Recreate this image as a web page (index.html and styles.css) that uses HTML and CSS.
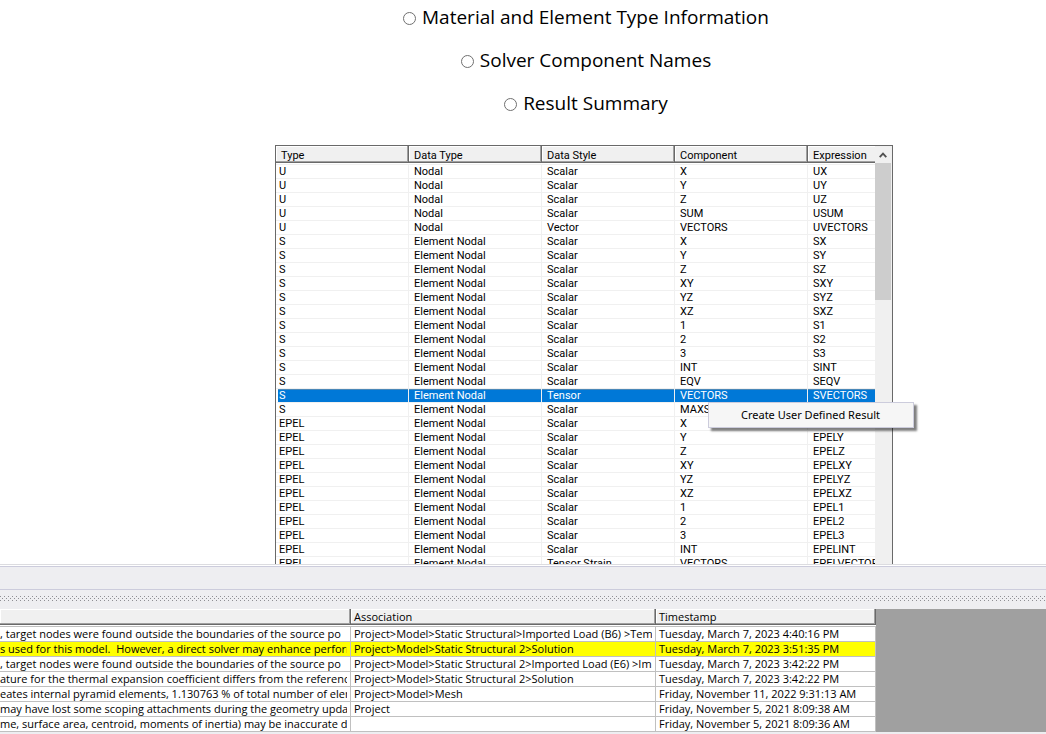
FILE: index.html
```html
<!DOCTYPE html>
<html lang="en">
<head>
<meta charset="utf-8">
<title>Solver Worksheet</title>
<link rel="stylesheet" href="styles.css">
</head>
<body>
<main class="worksheet">
  <form class="views">
    <label class="view"><input class="view-radio" type="radio" name="view">Material and Element Type Information</label>
    <label class="view"><input class="view-radio" type="radio" name="view">Solver Component Names</label>
    <label class="view"><input class="view-radio" type="radio" name="view">Result Summary</label>
  </form>
  <div class="results">
    <div class="grid-pane">
    <table class="grid">
      <thead><tr><th><span class="head">Type</span></th><th><span class="head">Data Type</span></th><th><span class="head">Data Style</span></th><th><span class="head">Component</span></th><th class="last"><span class="head">Expression</span></th></tr></thead>
      <tbody>
        <tr><td>U</td><td>Nodal</td><td>Scalar</td><td>X</td><td>UX</td></tr>
        <tr><td>U</td><td>Nodal</td><td>Scalar</td><td>Y</td><td>UY</td></tr>
        <tr><td>U</td><td>Nodal</td><td>Scalar</td><td>Z</td><td>UZ</td></tr>
        <tr><td>U</td><td>Nodal</td><td>Scalar</td><td>SUM</td><td>USUM</td></tr>
        <tr><td>U</td><td>Nodal</td><td>Vector</td><td>VECTORS</td><td>UVECTORS</td></tr>
        <tr><td>S</td><td>Element Nodal</td><td>Scalar</td><td>X</td><td>SX</td></tr>
        <tr><td>S</td><td>Element Nodal</td><td>Scalar</td><td>Y</td><td>SY</td></tr>
        <tr><td>S</td><td>Element Nodal</td><td>Scalar</td><td>Z</td><td>SZ</td></tr>
        <tr><td>S</td><td>Element Nodal</td><td>Scalar</td><td>XY</td><td>SXY</td></tr>
        <tr><td>S</td><td>Element Nodal</td><td>Scalar</td><td>YZ</td><td>SYZ</td></tr>
        <tr><td>S</td><td>Element Nodal</td><td>Scalar</td><td>XZ</td><td>SXZ</td></tr>
        <tr><td>S</td><td>Element Nodal</td><td>Scalar</td><td>1</td><td>S1</td></tr>
        <tr><td>S</td><td>Element Nodal</td><td>Scalar</td><td>2</td><td>S2</td></tr>
        <tr><td>S</td><td>Element Nodal</td><td>Scalar</td><td>3</td><td>S3</td></tr>
        <tr><td>S</td><td>Element Nodal</td><td>Scalar</td><td>INT</td><td>SINT</td></tr>
        <tr><td>S</td><td>Element Nodal</td><td>Scalar</td><td>EQV</td><td>SEQV</td></tr>
        <tr class="selected"><td>S</td><td>Element Nodal</td><td>Tensor</td><td>VECTORS</td><td>SVECTORS</td></tr>
        <tr><td>S</td><td>Element Nodal</td><td>Scalar</td><td>MAXSHEAR</td><td></td></tr>
        <tr><td>EPEL</td><td>Element Nodal</td><td>Scalar</td><td>X</td><td></td></tr>
        <tr><td>EPEL</td><td>Element Nodal</td><td>Scalar</td><td>Y</td><td>EPELY</td></tr>
        <tr><td>EPEL</td><td>Element Nodal</td><td>Scalar</td><td>Z</td><td>EPELZ</td></tr>
        <tr><td>EPEL</td><td>Element Nodal</td><td>Scalar</td><td>XY</td><td>EPELXY</td></tr>
        <tr><td>EPEL</td><td>Element Nodal</td><td>Scalar</td><td>YZ</td><td>EPELYZ</td></tr>
        <tr><td>EPEL</td><td>Element Nodal</td><td>Scalar</td><td>XZ</td><td>EPELXZ</td></tr>
        <tr><td>EPEL</td><td>Element Nodal</td><td>Scalar</td><td>1</td><td>EPEL1</td></tr>
        <tr><td>EPEL</td><td>Element Nodal</td><td>Scalar</td><td>2</td><td>EPEL2</td></tr>
        <tr><td>EPEL</td><td>Element Nodal</td><td>Scalar</td><td>3</td><td>EPEL3</td></tr>
        <tr><td>EPEL</td><td>Element Nodal</td><td>Scalar</td><td>INT</td><td>EPELINT</td></tr>
        <tr><td>EPEL</td><td>Element Nodal</td><td>Tensor Strain</td><td>VECTORS</td><td>EPELVECTORS</td></tr>
      </tbody>
    </table>
    </div>
    <div class="scrollbar">
      <button class="scroll-up" type="button" aria-label="Scroll up"><svg class="chevron" viewBox="0 0 8 6"><path d="M0.7 5.2L4 1.6L7.3 5.2" fill="none" stroke="#505050" stroke-width="1.8"/></svg></button>
      <div class="thumb"></div>
    </div>
    <div class="menu" role="menu"><button class="menu-item" type="button" role="menuitem">Create User Defined Result</button></div>
  </div>
</main>
<div class="status-strip"></div>
<div class="splitter"><svg class="grip" aria-hidden="true"><defs><pattern id="dots" width="4" height="4" patternUnits="userSpaceOnUse"><rect width="1" height="1" fill="#8f8f94"/><rect x="2" y="2" width="1" height="1" fill="#8f8f94"/></pattern></defs><rect width="100%" height="100%" fill="url(#dots)"/></svg></div>
<section class="messages">
  <table class="log">
    <thead><tr><th class="col-text"><span class="log-head">&nbsp;</span></th><th class="col-assoc"><span class="log-head">Association</span></th><th class="col-time"><span class="log-head">Timestamp</span></th></tr></thead>
    <tbody>
      <tr><td><span class="clip">, target nodes were found outside the boundaries of the source po</span></td><td><span class="clip">Project&gt;Model&gt;Static Structural&gt;Imported Load (B6) &gt;Tem</span></td><td>Tuesday, March 7, 2023 4:40:16 PM</td></tr>
      <tr class="warn"><td><span class="clip">s used for this model.&nbsp; However, a direct solver may enhance perform</span></td><td><span class="clip">Project&gt;Model&gt;Static Structural 2&gt;Solution</span></td><td>Tuesday, March 7, 2023 3:51:35 PM</td></tr>
      <tr><td><span class="clip">, target nodes were found outside the boundaries of the source po</span></td><td><span class="clip">Project&gt;Model&gt;Static Structural 2&gt;Imported Load (E6) &gt;Im</span></td><td>Tuesday, March 7, 2023 3:42:22 PM</td></tr>
      <tr><td><span class="clip">ature for the thermal expansion coefficient differs from the referenc</span></td><td><span class="clip">Project&gt;Model&gt;Static Structural 2&gt;Solution</span></td><td>Tuesday, March 7, 2023 3:42:22 PM</td></tr>
      <tr><td><span class="clip">eates internal pyramid elements, 1.130763 % of total number of elem</span></td><td><span class="clip">Project&gt;Model&gt;Mesh</span></td><td>Friday, November 11, 2022 9:31:13 AM</td></tr>
      <tr><td><span class="clip">may have lost some scoping attachments during the geometry updat</span></td><td><span class="clip">Project</span></td><td>Friday, November 5, 2021 8:09:38 AM</td></tr>
      <tr><td><span class="clip">me, surface area, centroid, moments of inertia) may be inaccurate du</span></td><td></td><td>Friday, November 5, 2021 8:09:36 AM</td></tr>
    </tbody>
  </table>
</section>
</body>
</html>
```
FILE: styles.css
```css
* { box-sizing: border-box; }
body {
  margin: 0;
  height: 100vh;
  display: flex;
  flex-direction: column;
  overflow: hidden;
  background: #eeeef1;
  color: #000;
  font: 11px/13px "Open Sans", "Noto Sans", sans-serif;
}
button { font: inherit; color: inherit; border: 0; background: none; padding: 0; margin: 0; }

.worksheet {
  flex: 1;
  min-height: 0;
  overflow: hidden;
  display: flex;
  flex-direction: column;
  align-items: center;
  padding-left: 122px;
  background: #fff;
}
.views {
  display: flex;
  flex-direction: column;
  align-items: center;
  gap: 15px;
  padding: 3px 0 28px 4px;
}
.view {
  display: flex;
  align-items: center;
  gap: 6px;
  font: 19px/28px "Open Sans", "Noto Sans", sans-serif;
}
.view-radio {
  appearance: none;
  width: 13px;
  height: 13px;
  margin: 2px 0 0;
  border: 1px solid #707070;
  border-radius: 50%;
  background: #fff;
}

.results {
  position: relative;
  flex: none;
  display: flex;
  width: 618px;
  border: 1px solid #696969;
  font-family: Roboto, "Noto Sans", sans-serif;
}
.grid-pane { flex: 1; min-width: 0; }
.grid {
  width: 100%;
  table-layout: fixed;
  border-spacing: 0;
}
.grid th { width: 133px; padding: 0 0 1px; border-bottom: 1px solid #f0f0f0; text-align: left; font-weight: 400; }
.grid th.last { width: auto; }
.head {
  display: block;
  height: 17px;
  padding: 1px 0 0 5px;
  line-height: 18px;
  background: #f0f0f0;
  border-right: 1px solid #696969;
  border-bottom: 1px solid #696969;
  box-shadow: inset -1px -1px #a0a0a0, inset 1px 1px #fff;
}
.last .head { border-right: 0; box-shadow: inset 0 -1px #a0a0a0, inset 1px 1px #fff; }
.grid td {
  height: 14px;
  padding: 1px 0 0 5px;
  line-height: 12px;
  border-bottom: 1px solid #f0f0f0;
  border-right: 1px solid #f0f0f0;
  white-space: nowrap;
  overflow: hidden;
}
.grid td:first-child { padding-left: 3px; }
.grid td:last-child { border-right: 0; }
.selected td { background: #0078d7; background-clip: padding-box; color: #fff; box-shadow: inset 0 1px #4a88b8; }
.selected td:first-child { border-left: 2px solid #fff; padding-left: 1px; }

.scrollbar { width: 17px; padding: 0 1px 0 0; background: #f0f0f0; }
.scroll-up { display: flex; align-items: center; justify-content: center; width: 16px; height: 17px; }
.chevron { width: 8px; height: 6px; }
.thumb { height: 137px; background: #cdcdcd; }

.menu {
  position: absolute;
  left: 432px;
  top: 256px;
  width: 206px;
  border: 1px solid #ccccdc;
  background: #f6f6f6;
  box-shadow: 3px 3px 2px #00000080;
  font-family: "Noto Sans", "Open Sans", sans-serif;
}
.menu-item { display: block; width: 100%; padding-left: 32px; line-height: 24px; text-align: left; }

.status-strip {
  flex: none;
  height: 26px;
  border-top: 1px solid #dcdce0;
  border-bottom: 1px solid #ccccdc;
  background: linear-gradient(#fff 1px, #ccccdc 1px, #ccccdc 2px, #eeeef1 2px);
}
.splitter { flex: none; padding: 6px 0 8px; }
.grip { display: block; width: 100%; height: 5px; }

.messages { flex: none; background: #a0a0a0; border-bottom: 2px solid #eeeef1; }
.log { width: 876px; table-layout: fixed; border-spacing: 0; background: #fff; }
.log th { padding: 0 0 1px; border-bottom: 1px solid #c0c0c0; text-align: left; font-weight: 400; }
.col-text { width: 351px; }
.col-assoc { width: 305px; }
.log-head {
  display: block;
  height: 16px;
  padding-left: 3px;
  line-height: 16px;
  background: #f0f0f0;
  border-right: 1px solid #696969;
  border-bottom: 1px solid #696969;
  box-shadow: inset -1px -1px #a0a0a0, inset 1px 1px #fff;
}
.log td {
  height: 15px;
  padding: 0 3px;
  line-height: 14px;
  border-right: 1px solid #c0c0c0;
  border-bottom: 1px solid #c0c0c0;
  white-space: nowrap;
  overflow: hidden;
}
.log td:first-child { padding-left: 0; }
.clip { display: block; overflow: hidden; }
.warn td { background: #ff0; }
```
